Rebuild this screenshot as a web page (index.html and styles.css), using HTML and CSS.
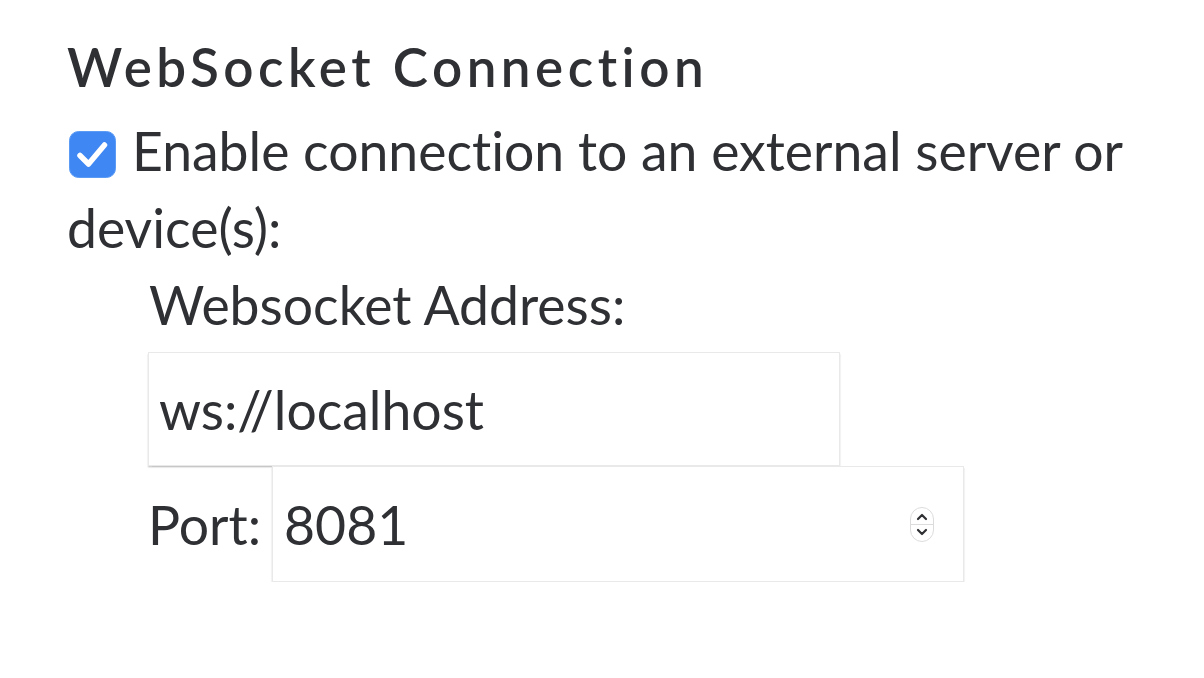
FILE: index.html
```
<!DOCTYPE html>
<html>
<head>
<meta charset="utf-8">
<link rel="stylesheet" href="styles.css">
</head>
<body>
<section class="panel">
  <h2 class="title">WebSocket Connection</h2>
  <p class="enable"><span class="check"><svg viewBox="0 0 47 47" width="47" height="47"><rect x="0.5" y="0.5" width="46" height="46" rx="9" fill="#3f87f3" stroke="#5b9af5"/><path d="M11 24.5 L19.5 33 L35.5 14" fill="none" stroke="#fff" stroke-width="5.5" stroke-linecap="round" stroke-linejoin="round"/></svg></span>Enable connection to an external server or device(s):</p>
  <div class="settings">
    <div class="label">Websocket Address:</div>
    <input class="field addr" type="text" value="ws://localhost">
    <div class="port-row">
      <span class="label port-label">Port:</span>
      <div class="port-wrap">
        <input class="field port" type="text" value="8081">
        <span class="spinner"><svg viewBox="0 0 24 35" width="24" height="35"><rect x="0.5" y="0.5" width="23" height="34" rx="11.5" fill="#fff" stroke="#dcdcdc"/><line x1="1" y1="17.5" x2="23" y2="17.5" stroke="#dcdcdc"/><path d="M8 12 L12 8 L16 12" fill="none" stroke="#2f3033" stroke-width="2.2" stroke-linecap="round" stroke-linejoin="round"/><path d="M8 23 L12 27 L16 23" fill="none" stroke="#2f3033" stroke-width="2.2" stroke-linecap="round" stroke-linejoin="round"/></svg></span>
      </div>
    </div>
  </div>
</section>
</body>
</html>
```
FILE: styles.css
```
body {
  margin: 0;
  background: #fff;
  color: #2e3034;
  font-family: Lato, "Noto Sans", sans-serif;
  font-variant-ligatures: none;
}
.panel {
  width: 1113px;
  padding: 28px 0 0 67px;
}
.title {
  margin: 0 0 7px;
  font-size: 53px;
  line-height: 77px;
  font-weight: 600;
  letter-spacing: 4.5px;
}
.enable {
  margin: 0;
  font-size: 53.5px;
  line-height: 77px;
}
.check {
  display: inline-block;
  width: 47px;
  height: 47px;
  margin: 0 16px 0 2px;
  vertical-align: -7px;
}
.check svg { display: block; }
.settings {
  padding-left: 81px;
  font-size: 53.5px;
}
.label {
  line-height: 77px;
  margin-left: 1px;
}
.field {
  display: block;
  box-sizing: border-box;
  width: 692px;
  height: 114px;
  margin: 9px 0 0;
  padding: 0 10px;
  border: 1px solid #e9e9e9;
  box-shadow: 0 1.5px 1.5px rgba(0,0,0,0.22);
  font-family: inherit;
  font-size: 53.5px;
  color: #2e3034;
  background: #fff;
  outline: none;
  font-variant-ligatures: none;
}
.port-row {
  display: flex;
  align-items: baseline;
}
.port-label {
  margin: 0 11px 0 0;
}
.port-wrap {
  position: relative;
}
.port {
  margin: 0;
  height: 116px;
  padding: 0 10px 0 11px;
}
.spinner {
  position: absolute;
  left: 638px;
  top: 41px;
  width: 24px;
  height: 35px;
}
.spinner svg { display: block; }
```
